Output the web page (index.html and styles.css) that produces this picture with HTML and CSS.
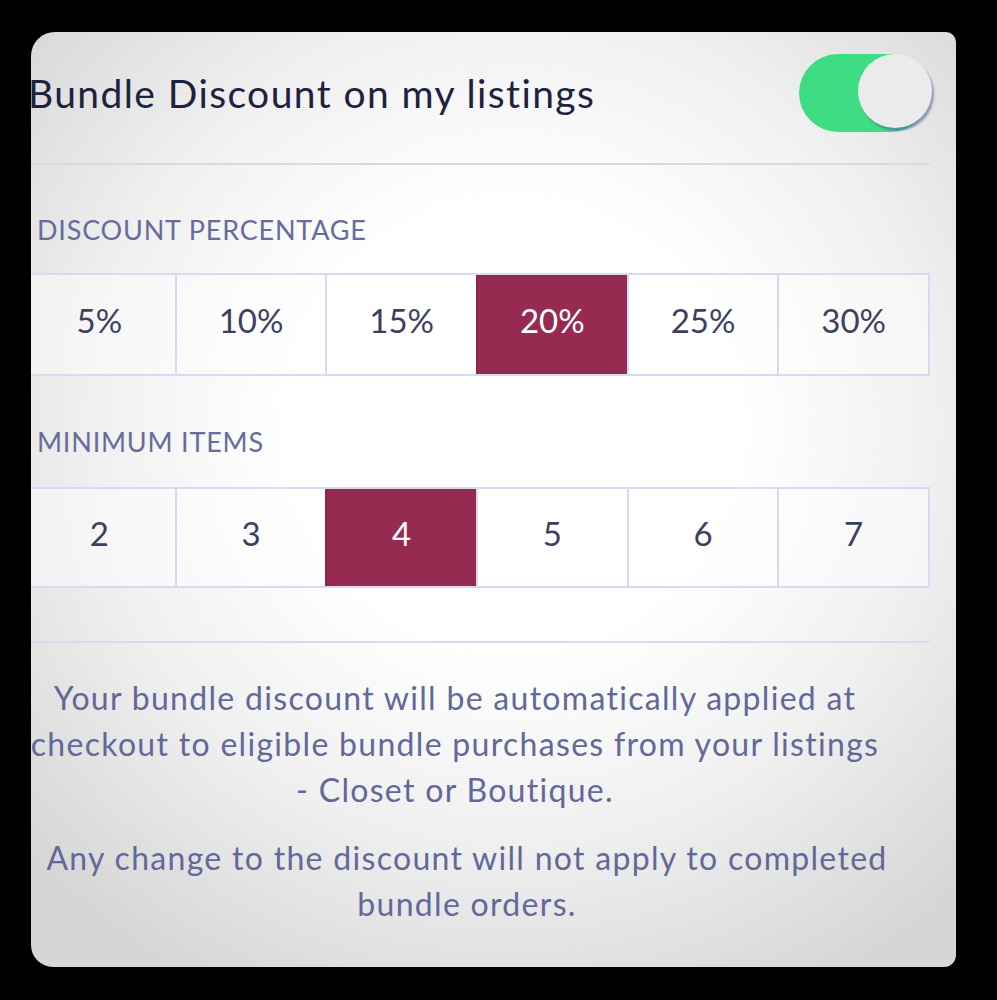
FILE: index.html
```html
<!DOCTYPE html>
<html>
<head>
<meta charset="utf-8">
<link rel="stylesheet" href="styles.css">
</head>
<body>
<div class="card">
  <div class="inner">
    <div class="header">
      <h1 class="title">Bundle Discount on my listings</h1>
      <div class="toggle"><span class="knob"></span></div>
    </div>
    <div class="label first">DISCOUNT PERCENTAGE</div>
    <div class="options">
      <div class="opt">5%</div>
      <div class="opt">10%</div>
      <div class="opt">15%</div>
      <div class="opt selected">20%</div>
      <div class="opt">25%</div>
      <div class="opt">30%</div>
    </div>
    <div class="label second">MINIMUM ITEMS</div>
    <div class="options items">
      <div class="opt">2</div>
      <div class="opt">3</div>
      <div class="opt selected">4</div>
      <div class="opt">5</div>
      <div class="opt">6</div>
      <div class="opt">7</div>
    </div>
    <div class="divider"></div>
    <p class="note">Your bundle discount will be automatically applied at<br>checkout to eligible bundle purchases from your listings<br>- Closet or Boutique.</p>
    <p class="note second-note">Any change to the discount will not apply to completed<br>bundle orders.</p>
  </div>
</div>
</body>
</html>
```

FILE: styles.css
```css
html, body {
  margin: 0;
  padding: 0;
  background: #000;
}
body {
  width: 997px;
  height: 1000px;
  overflow: hidden;
  font-family: Lato, "Liberation Sans", sans-serif;
}
.card {
  margin: 32px 0 0 31px;
  width: 925px;
  height: 935px;
  border-radius: 24px 10px 12px 22px;
  overflow: hidden;
  background: radial-gradient(ellipse 70% 68% at 52% 42%, #ffffff 35%, #f0f0f0 65%, #d6d6d6 100%);
}
.inner {
  margin-left: -9px;
  width: 908px;
}
.header {
  height: 131px;
  display: flex;
  align-items: center;
  justify-content: space-between;
  border-bottom: 2px solid #d6d9ec;
}
.title {
  margin: -10px 0 0 6px;
  font-size: 39px;
  font-weight: 400;
  color: #1e2240;
  letter-spacing: 1.4px;
}
.toggle {
  position: relative;
  width: 131px;
  height: 78px;
  border-radius: 39px;
  background: #3fdd83;
  margin-top: -10px;
}
.knob {
  position: absolute;
  right: -2px;
  top: 0px;
  width: 74px;
  height: 74px;
  border-radius: 50%;
  background: #ebebeb;
  box-shadow: 2px 3px 2px rgba(80, 90, 160, 0.55);
}
.label {
  height: 30px;
  line-height: 30px;
  padding-left: 15px;
  font-size: 27px;
  color: #676c9d;
  letter-spacing: 0.8px;
}
.label.first { margin-top: 50px; margin-bottom: 28px; }
.label.second { margin-top: 51px; margin-bottom: 30px; }
.options {
  display: grid;
  grid-template-columns: repeat(6, 1fr);
  border: 2px solid #d8dbef;
  height: 99px;
}
.items { height: 97px; }
.opt {
  display: flex;
  align-items: center;
  justify-content: center;
  padding-bottom: 9px;
  border-left: 2px solid #d8dbef;
  background: rgba(255, 255, 255, 0.45);
  font-size: 33px;
  color: #3c405e;
}
.opt:first-child { border-left: 0; }
.opt.selected {
  background: #972a51;
  color: #fff;
  border-left-color: #8f2448;
}
.divider {
  margin-top: 53px;
  height: 2px;
  background: #d8dbef;
}
.note {
  margin: 32px 0 0 -42px;
  font-size: 32px;
  line-height: 46px;
  text-align: center;
  color: #62689a;
  letter-spacing: 1.3px;
}
.second-note { margin: 22px 0 0 -18px; }
```
